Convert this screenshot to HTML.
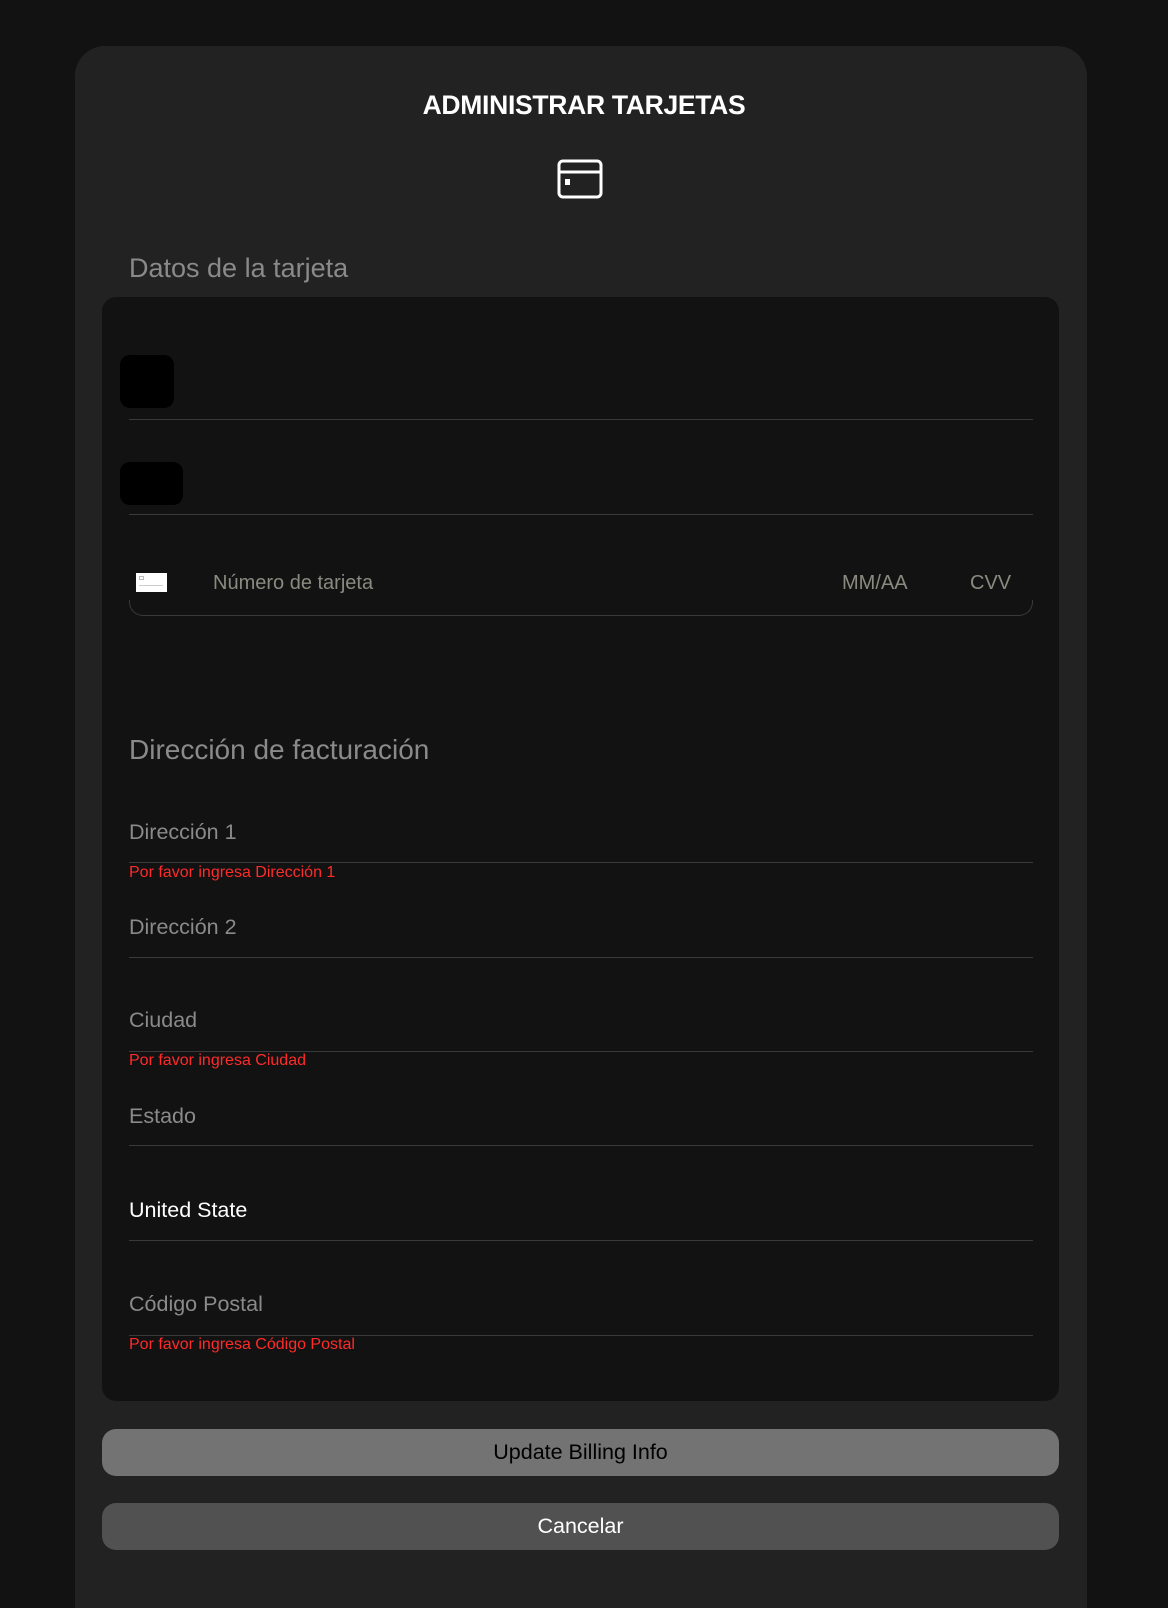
<!DOCTYPE html>
<html><head><meta charset="utf-8"><style>
*{margin:0;padding:0;box-sizing:border-box}
html,body{width:1168px;height:1608px;overflow:hidden}
body{background:#121212;font-family:"Liberation Sans",sans-serif;position:relative}
.a{position:absolute}
.card{left:75px;top:46px;width:1012px;height:1562px;background:#222;border-radius:30px 30px 0 0}
.panel{left:102px;top:297px;width:957px;height:1104px;background:#121212;border-radius:14px}
.line{position:absolute;left:129px;width:904px;height:1px;background:#3a3a3a}
.lbl{position:absolute;left:129px;font-size:21.5px;color:#8a8a8a;line-height:24px}
.err{position:absolute;left:129px;font-size:16px;color:#ff2a2a;line-height:18px}
.btn{position:absolute;left:102px;width:957px;height:47px;border-radius:14px;text-align:center;line-height:47px;font-size:21.5px}
</style></head><body>
<div class="a card"></div>
<div class="a" style="left:0;width:1168px;top:90px;text-align:center;color:#fff;font-weight:bold;font-size:26.5px;line-height:30px;letter-spacing:-0.3px">ADMINISTRAR TARJETAS</div>
<svg class="a" style="left:557px;top:159px" width="46" height="42" viewBox="0 0 46 42"><rect x="2" y="2" width="42" height="36" rx="4" fill="none" stroke="#fff" stroke-width="3"/><line x1="2" y1="13" x2="44" y2="13" stroke="#fff" stroke-width="3"/><rect x="8" y="20" width="5" height="6" fill="#fff"/></svg>
<div class="a" style="left:129px;top:252px;font-size:27px;color:#8a8a8a;line-height:32px">Datos de la tarjeta</div>
<div class="a panel"></div>
<div class="a" style="left:120px;top:355px;width:54px;height:53px;background:#000;border-radius:10px"></div>
<div class="line" style="top:419px"></div>
<div class="a" style="left:120px;top:462px;width:63px;height:43px;background:#000;border-radius:10px"></div>
<div class="line" style="top:514px"></div>
<div class="a" style="left:129px;top:600px;width:904px;height:16px;border:1px solid #3a3a3a;border-top:none;border-radius:0 0 14px 14px"></div>
<div class="a" style="left:136px;top:573px;width:31px;height:19px;background:#fff"><div class="a" style="left:3px;top:3px;width:5px;height:4px;border:1px solid #bbb"></div><div class="a" style="left:3px;top:12px;width:24px;height:1px;background:#ccc"></div></div>
<div class="a" style="left:213px;top:571px;font-size:20px;color:#8a8a80;line-height:24px">Número de tarjeta</div>
<div class="a" style="left:842px;top:571px;font-size:20px;color:#8a8a80;line-height:24px">MM/AA</div>
<div class="a" style="left:970px;top:571px;font-size:20px;color:#8a8a80;line-height:24px">CVV</div>
<div class="a" style="left:129px;top:734px;font-size:28px;color:#8a8a8a;line-height:32px">Dirección de facturación</div>
<div class="lbl" style="top:820px">Dirección 1</div><div class="line" style="top:862px"></div>
<div class="err" style="top:864px">Por favor ingresa Dirección 1</div>
<div class="lbl" style="top:915px">Dirección 2</div><div class="line" style="top:957px"></div>
<div class="lbl" style="top:1008px">Ciudad</div><div class="line" style="top:1051px"></div>
<div class="err" style="top:1052px">Por favor ingresa Ciudad</div>
<div class="lbl" style="top:1104px">Estado</div><div class="line" style="top:1145px"></div>
<div class="lbl" style="top:1198px;color:#fff">United State</div><div class="line" style="top:1240px"></div>
<div class="lbl" style="top:1292px">Código Postal</div><div class="line" style="top:1335px"></div>
<div class="err" style="top:1336px">Por favor ingresa Código Postal</div>
<div class="btn" style="top:1429px;background:#737373;color:#000">Update Billing Info</div>
<div class="btn" style="top:1503px;background:#515151;color:#fff">Cancelar</div>
</body></html>
